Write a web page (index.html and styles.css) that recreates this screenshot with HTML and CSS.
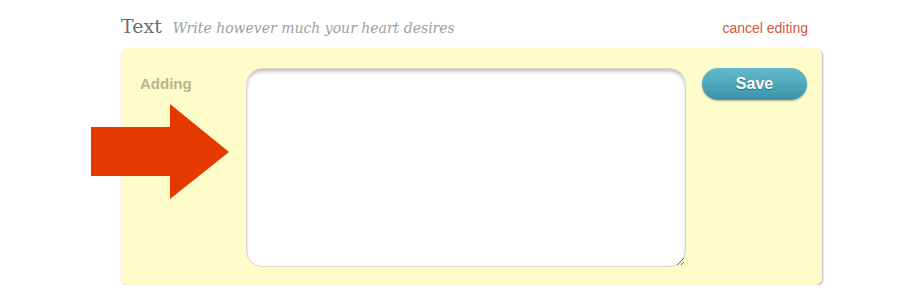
FILE: index.html
```html
<!DOCTYPE html>
<html>
<head>
	<meta charset="UTF-8">
	<title>Text block editor</title>
	<link rel="stylesheet" href="styles.css">
</head>
<body>
	<div class="editor">
		<div class="editor-head">
			<h2 class="block-title">Text <em>Write however much your heart desires</em></h2>
			<a class="cancel-link" href="#">cancel editing</a>
		</div>
		<div class="panel">
			<div class="state-label">Adding</div>
			<textarea class="text-input"></textarea>
			<button class="save-btn">Save</button>
			<svg class="pointer-arrow" width="139" height="96" viewBox="0 0 139 96">
				<polygon points="0,23 79,23 79,0 138,48 79,95 79,72 0,72" fill="#e43a00"/>
			</svg>
		</div>
	</div>
</body>
</html>
```

FILE: styles.css
```css
body {
	margin: 0;
	background-color: #fff;
	font-family: 'Liberation Sans', Arial, sans-serif;
}

.editor {
	width: 701px;
	margin-left: 121px;
	padding-top: 15px;
}

.editor-head {
	display: flex;
	justify-content: space-between;
	align-items: baseline;
	height: 33px;
}

.block-title {
	margin: 0;
	font-family: 'DejaVu Serif', Georgia, serif;
	font-weight: normal;
	font-size: 19px;
	color: #6e6e6e;
}

.block-title em {
	margin-left: 5px;
	font-size: 14px;
	color: #9e9e9e;
}

.cancel-link {
	margin-right: 14px;
	font-size: 14px;
	color: #d3583f;
	text-decoration: none;
}

.panel {
	position: relative;
	display: flex;
	align-items: flex-start;
	height: 237px;
	padding: 20px 15px 0 19px;
	box-sizing: border-box;
	background-color: #fefdca;
	border-radius: 7px;
	box-shadow: 1px 1px 2px rgba(0, 0, 0, 0.3);
}

.state-label {
	width: 106px;
	padding-top: 7px;
	font-size: 15px;
	font-weight: bold;
	color: #b6b68e;
}

.text-input {
	width: 440px;
	height: 199px;
	box-sizing: border-box;
	border: 1px solid #d8d8c8;
	border-radius: 16px;
	background-color: #fff;
	box-shadow: inset 0 3px 4px -1px rgba(0, 0, 0, 0.3);
	outline: none;
	resize: vertical;
}

.save-btn {
	width: 105px;
	height: 32px;
	margin-left: 16px;
	border: none;
	border-radius: 16px;
	background: linear-gradient(#62bbcc, #3b93a9);
	box-shadow: 0 1px 2px rgba(0, 0, 0, 0.3);
	color: #fff;
	font-family: 'Liberation Sans', Arial, sans-serif;
	font-size: 16px;
	font-weight: bold;
	text-shadow: 0 1px 1px rgba(0, 0, 0, 0.35);
	cursor: pointer;
}

.pointer-arrow {
	position: absolute;
	left: -30px;
	top: 56px;
}
```
